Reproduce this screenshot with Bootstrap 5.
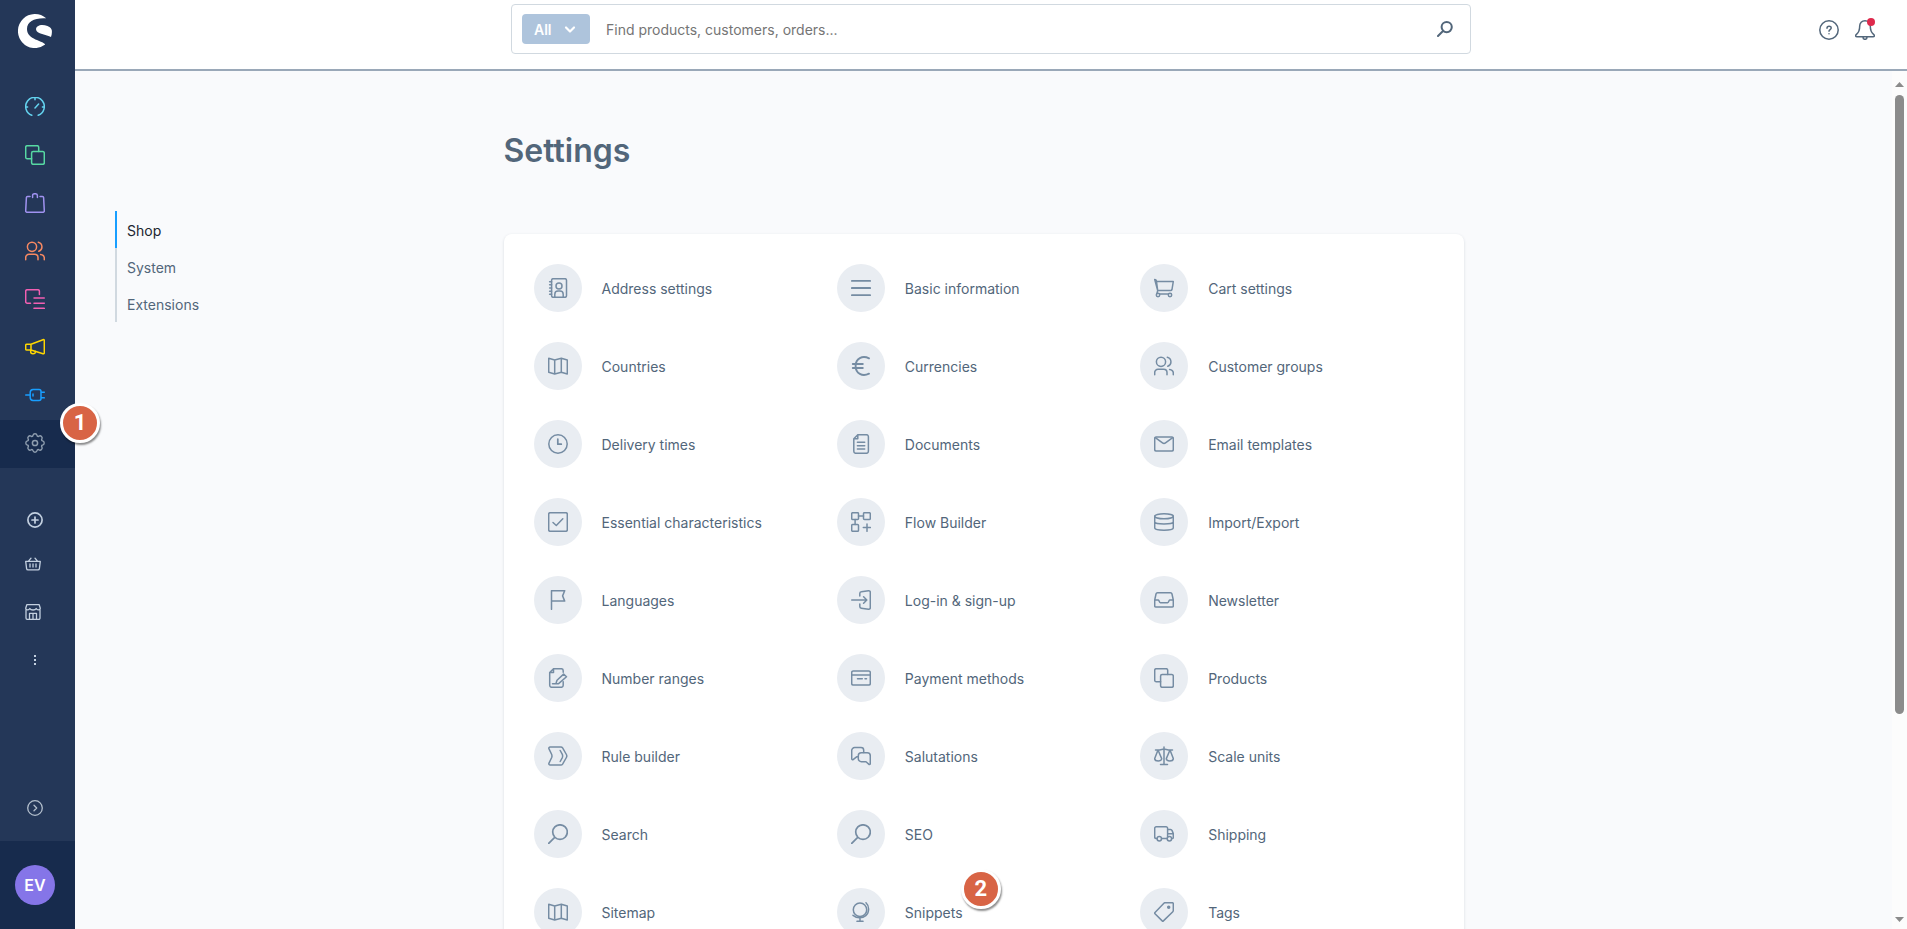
<!DOCTYPE html>
<html lang="en">
<head>
<meta charset="utf-8">
<meta name="viewport" content="width=device-width, initial-scale=1">
<title>Settings</title>
<link href="https://cdn.jsdelivr.net/npm/bootstrap@5.3.0/dist/css/bootstrap.min.css" rel="stylesheet">
<style>
  :root { --navy: #243758; --navy-dark: #172b4d; --ink: #52667a; --icon: #758ca3; --line: #d1d9e0; }
  body { font-family: Inter, "Liberation Sans", sans-serif; font-optical-sizing: none; font-size: 14px; line-height: 20px; color: var(--ink); }
  body, .canvas { background: #f9fafc; }
  svg { display: block; flex: none; }
  .ico { width: 20px; height: 20px; fill: none; stroke: currentColor; stroke-width: 1.5; stroke-linecap: round; stroke-linejoin: round; }
  .ico-sm { width: 16px; height: 16px; stroke-width: 1.3; }
  .ico-xs { width: 12px; height: 12px; }

  .sidebar { width: 75px; background: var(--navy); z-index: 2; }
  .brand { height: 84px; padding: 14px 0 0 18px; }
  .side-item { height: 48px; padding: 0 0 2px 25px; color: #c3d0e0; }
  .side-item.active { background: var(--navy-dark); color: #8f9eaf; }
  .side-item.short { height: 40px; }
  .side-item .slot { width: 20px; display: flex; justify-content: center; }
  .quick { margin-top: 33px; }
  .side-item.toggle { height: 65px; border: 0; background: transparent; color: #b3bfcc; }
  .account { height: 88px; padding-left: 15px; background: var(--navy-dark); }
  .avatar { width: 40px; height: 40px; background: #8575e8; color: #fff; font-size: 16px; font-weight: 600; }

  .topbar { height: 71px; padding-top: 4px; background: #fff; border-bottom: 2px solid #9aa8b8; }
  .three { display: grid; grid-template-columns: minmax(0, 1fr) minmax(0, 960px) minmax(0, 1fr); align-items: start; }
  .searchbox { height: 50px; padding: 0 17px 0 10px; border: 1px solid var(--line); border-radius: 4px; background: #fff; }
  .btn-scope { width: 68px; height: 30px; padding: 2px 14px 0 12px; background: #aec4dc; color: #fff; font-weight: 600; font-size: 14px; line-height: 20px; border: 0; border-radius: 4px; }
  .searchbox input { border: 0; outline: 0; padding: 2px 0 0; margin-left: 16px; font-size: 14px; line-height: 20px; color: var(--ink); background: transparent; }
  .searchbox input::placeholder { color: #757575; opacity: 1; }
  .plain { border: 0; background: transparent; padding: 0; color: var(--ink); }
  .actions { height: 52px; padding-right: 32px; gap: 16px; }
  .dot { width: 8px; height: 8px; top: -2px; right: 0; background: #de294c; }

  .anchors { grid-row: 1 / 3; padding: 140px 0 0 40px; }
  .anchors a { height: 37px; padding: 2px 0 0 10px; border-left: 2px solid var(--line); color: var(--ink); }
  .anchors a.active { border-color: #189eff; color: #1c2530; }
  .page-title { margin: 56px 0 59px; font-size: 32px; line-height: 48px; font-weight: 600; color: var(--ink); }
  .panel { grid-column: 2; padding: 30px; background: #fff; border-radius: 8px; box-shadow: 0 1px 3px rgba(40, 60, 90, .16); }
  .tiles { display: grid; grid-template-columns: repeat(3, minmax(0, 1fr)); gap: 30px 10px; }
  .tile { height: 48px; padding-top: 2px; gap: 20px; color: var(--ink); }
  .disc { width: 48px; height: 48px; margin-top: -2px; flex: none; background: #e9edf2; color: var(--icon); }

  .rail { width: 15px; padding: 11px 3px 7px; background: #fcfcfc; color: #8b8b8b; }
  .rail .track { padding: 8px 0; }
  .rail .thumb { height: 76%; width: 9px; border-radius: 5px; background: #8b8b8b; }
  .step-pin { width: 40px; height: 40px; border: 3px solid #fff; background: #d86445; color: #fff; font-family: Roboto, sans-serif; font-weight: 700; font-size: 22px; line-height: 1; box-shadow: 1px 2px 2px rgba(0, 0, 0, .45); z-index: 3; }
  .pin-one { left: 60px; top: -17px; }
  .pin-two { left: 124px; top: -19px; }
</style>
</head>
<body class="d-flex vh-100 overflow-hidden">

<svg width="0" height="0" class="position-absolute" aria-hidden="true">
  <symbol id="i-gauge" viewBox="0 0 20 20"><path d="M6.800 18.300a9.300 9.300 0 1 1 6.400 0M10 1v1.800M1 10h1.600M17.400 10H19M10 11l3.600-4"/></symbol>
  <symbol id="i-copy" viewBox="0 0 20 20"><path d="M6.600 13.700H2.200A1.500 1.500 0 0 1 .7 12.200V2.200A1.500 1.500 0 0 1 2.200.7h10a1.500 1.500 0 0 1 1.500 1.500v4.400"/><rect x="6.600" y="6.600" width="12.700" height="12.700" rx="1.500"/></symbol>
  <symbol id="i-bag" viewBox="0 0 20 20"><path d="M5 3.400H2.600a1.200 1.200 0 0 0-1.200 1.100L.7 17.800a1.400 1.400 0 0 0 1.400 1.500h15.800a1.400 1.400 0 0 0 1.400-1.500L18.600 4.500a1.200 1.200 0 0 0-1.200-1.100H15M7.600 4.600V2.400C7.600 1.400 8.400.7 10 .7s2.400.7 2.400 1.700v2.200"/></symbol>
  <symbol id="i-users" viewBox="0 0 20 20"><circle cx="7" cy="5.800" r="4.600"/><path d="M.7 18.700v-2.200a3.300 3.300 0 0 1 3.300-3.300h5.700a3.300 3.300 0 0 1 3.300 3.300v2.200M13.300 1.200a4.700 4.700 0 0 1 .5 9M15.600 13.400c2.300.4 3.700 1.500 3.700 3.500v1.800"/></symbol>
  <symbol id="i-orders" viewBox="0 0 20 20"><path d="M5.500 14.200H2.200a1.500 1.500 0 0 1-1.500-1.500V2.200A1.500 1.500 0 0 1 2.200.7h10.700a1.500 1.500 0 0 1 1.500 1.500v3.400M9 9h10.300M9 14.200h10.300M9 19.300h10.300"/></symbol>
  <symbol id="i-horn" viewBox="0 0 20 20"><path d="M6 7.200 18 2.700c.8-.3 1.300 0 1.300.8v12.300c0 .8-.5 1.100-1.300.9L6 13M6 7.200V13M6 7.200H1.700a1 1 0 0 0-1 1V12a1 1 0 0 0 1 1H6M5.700 13.200v1.500c0 2.700 4.300 2.700 4.800.4l.2-.8"/></symbol>
  <symbol id="i-plug" viewBox="0 0 20 20"><path d="M.7 10h4.500M8 4.400h6a2 2 0 0 1 2 2v7.200a2 2 0 0 1-2 2H8a3 3 0 0 1-2.800-3V7.400a3 3 0 0 1 2.800-3ZM16 7.200h3.300M16 12.800h3.300M8 9v2"/></symbol>
  <symbol id="i-gear" viewBox="0 0 20 20"><circle cx="10" cy="10" r="2.600"/><path transform="translate(.8 .8) scale(1.15)" stroke-width="1.200" d="M9.796 1.343c-.527-1.790-3.065-1.790-3.592 0l-.094.319a.873.873 0 0 1-1.255.520l-.292-.160c-1.640-.892-3.433.902-2.540 2.541l.159.292a.873.873 0 0 1-.520 1.255l-.319.094c-1.790.527-1.790 3.065 0 3.592l.319.094a.873.873 0 0 1 .520 1.255l-.160.292c-.892 1.640.901 3.434 2.541 2.540l.292-.159a.873.873 0 0 1 1.255.520l.094.319c.527 1.790 3.065 1.790 3.592 0l.094-.319a.873.873 0 0 1 1.255-.520l.292.160c1.640.893 3.434-.902 2.540-2.541l-.159-.292a.873.873 0 0 1 .520-1.255l.319-.094c1.790-.527 1.790-3.065 0-3.592l-.319-.094a.873.873 0 0 1-.520-1.255l.160-.292c.893-1.640-.902-3.433-2.541-2.540l-.292.159a.873.873 0 0 1-1.255-.520z"/></symbol>
  <symbol id="i-plus" viewBox="0 0 16 16"><path stroke-width="1.700" d="M8 .9a7.100 7.100 0 1 1 0 14.200A7.100 7.100 0 0 1 8 .9ZM8 5v6M5 8h6"/></symbol>
  <symbol id="i-basket" viewBox="0 0 16 16"><path d="M.7 5.400h14.600l-.9 7.200a1.500 1.500 0 0 1-1.500 1.300H3.100a1.500 1.500 0 0 1-1.500-1.300ZM3.500 5.200 6 2.200M12.500 5.200l-2.500-3M5 8v3M8 8v3M11 8v3"/></symbol>
  <symbol id="i-shop" viewBox="0 0 16 16"><path d="M1 5.500v8.600a1.200 1.200 0 0 0 1.200 1.200h11.600a1.200 1.200 0 0 0 1.200-1.200V5.500M1.800.7h12.400l1.100 3.600c-.3 2-3.300 2.200-4.100.2-.9 2-5.400 2-6.400 0-.8 2-3.800 1.800-4.100-.2ZM4.500 15V9.300h7V15M8 9.500V15"/></symbol>
  <symbol id="i-dots" viewBox="0 0 16 16"><path fill="currentColor" stroke="none" d="M7 3h2v2H7zM7 7h2v2H7zM7 11h2v2H7z"/></symbol>
  <symbol id="i-next" viewBox="0 0 16 16"><circle cx="8" cy="8" r="7.300"/><path d="m7 5.300 2.700 2.700L7 10.700"/></symbol>
  <symbol id="i-chev" viewBox="0 0 12 12"><path stroke-width="2.200" d="m2 3.500 4 4 4-4"/></symbol>
  <symbol id="i-search" viewBox="0 0 20 20"><path stroke-width="1.700" d="M12 .8a7.300 7.300 0 1 1 0 14.600A7.300 7.300 0 0 1 12 .8ZM6.700 13.300l-6 6"/></symbol>
  <symbol id="i-find" viewBox="0 0 16 16"><path stroke-width="2" d="M9.700 1a5.100 5.100 0 1 1 0 10.200A5.100 5.100 0 0 1 9.700 1ZM6 10l-5 5"/></symbol>
  <symbol id="i-help" viewBox="0 0 20 20"><circle cx="10" cy="10" r="9.200"/><path d="M8 8.300C8 5.600 12.200 5.700 12.200 8c0 1.500-2 1.600-2.200 3.200M10 13.700v.1"/></symbol>
  <symbol id="i-bell" viewBox="0 0 20 20"><path d="M10 .8c3.200 0 5.300 2.200 5.300 5.300 0 5.500 1.200 6.600 3 8 1.800 1.500 1.200 2.600-.3 2.600H2c-1.500 0-2.100-1.100-.3-2.600 1.800-1.400 3-2.500 3-8C4.700 3 6.800.8 10 .8ZM8 17.200c0 2.800 4 2.800 4 0"/></symbol>

  <symbol id="i-address" viewBox="0 0 20 20"><rect x="3.600" y=".7" width="14.900" height="18.600" rx="1.500"/><circle cx="11" cy="7.900" r="3"/><path d="M6.800 19v-2.700c0-2 1.200-3.200 3.200-3.200h2c2 0 3.200 1.200 3.200 3.200V19M1.600 3.700h2M1.600 6.800h2M1.600 10h2M1.600 13.200h2M1.600 16.300h2"/></symbol>
  <symbol id="i-map" viewBox="0 0 20 20"><path d="m.7 2.300 6 1.700 6.600-1.700 6 1.700v14l-6-1.700L6.700 18l-6-1.700ZM6.700 4v14M13.300 2.300v14"/></symbol>
  <symbol id="i-clock" viewBox="0 0 20 20"><circle cx="10" cy="10" r="9.200"/><path stroke-width="1.700" d="M9.800 5v5.200h3.500"/></symbol>
  <symbol id="i-check" viewBox="0 0 20 20"><rect x=".7" y=".7" width="18.600" height="18.600" rx="1.500"/><path d="m5 10.500 3.300 3 6.500-6.800"/></symbol>
  <symbol id="i-flag" viewBox="0 0 20 20"><path d="M3.500 19.300V.7H16.700L14.600 5.900 16.700 11.100H3.500"/></symbol>
  <symbol id="i-note" viewBox="0 0 20 20"><path d="M15.200 4.300V2.700a2 2 0 0 0-2-2H5.500L1.700 4.500v12.800a2 2 0 0 0 2 2h9.500a2 2 0 0 0 2-2v-3.500M5.500.9v3.600H1.900M4.500 15.700h6M8.200 14.800l.8-2.500 6.600-6.200 2.900 2.700-7.600 6.600"/></symbol>
  <symbol id="i-rule" viewBox="0 0 20 20"><path d="M2.200.9h10.700c.8 0 1.300.4 1.700 1l3.800 6.600c.5.900.5 2.100 0 3l-3.800 6.600c-.4.600-.9 1-1.700 1H2.200c-1.100 0-1.700-1-1.200-2l2.700-5.600c.3-.8.3-2.200 0-3L1 2.900C.5 1.900 1.100.9 2.200.9ZM12.200 4.500l2 3.700c.6 1.200.6 2.400 0 3.600l-2 3.700"/></symbol>
  <symbol id="i-menu" viewBox="0 0 20 20"><path stroke-width="1.900" d="M.9 2.900h18.200M.9 10h18.200M.9 17.100h18.200"/></symbol>
  <symbol id="i-euro" viewBox="0 0 20 20"><path stroke-width="1.900" d="M18 2.300C11.500-.9 4.600 2.300 4.600 10S11.500 20.900 18 17.700M1.800 8h10M1.800 12h10"/></symbol>
  <symbol id="i-doc" viewBox="0 0 20 20"><path d="M6.800.7h8.600a2 2 0 0 1 2 2v14.600a2 2 0 0 1-2 2H4.800a2 2 0 0 1-2-2V4.700ZM6.800.7v4h-4M6.400 8.300h7.300M6.400 11.700h7.300M6.400 15h7.300"/></symbol>
  <symbol id="i-flow" viewBox="0 0 20 20"><rect x=".7" y=".7" width="6.800" height="6.800" rx="1"/><rect x="12.500" y=".7" width="6.800" height="6.800" rx="1"/><rect x=".7" y="12.500" width="6.800" height="6.800" rx="1"/><path d="M7.500 4.100h5M4.100 7.500v5M16 12v7.300M12.300 15.600h7.100"/></symbol>
  <symbol id="i-login" viewBox="0 0 20 20"><path d="M.7 10h15M12.600 6.800l3.200 3.200-3.200 3.200M8.800 6V3.400c0-1 .6-1.500 1.500-1.600l7.300-1c1-.1 1.700.4 1.700 1.400v15.600c0 1-.7 1.500-1.700 1.400l-7.300-1c-.9-.1-1.500-.6-1.500-1.600V14"/></symbol>
  <symbol id="i-pay" viewBox="0 0 20 20"><rect x=".7" y="2.900" width="18.600" height="14.200" rx="1.500"/><path d="M.8 7h18.400M6.500 10.700h4.800M14 10.700h1.500"/></symbol>
  <symbol id="i-chat" viewBox="0 0 20 20"><path d="M7.300 10.800H5.600l-3.200 2.500c-.9.700-1.700.2-1.700-.8V4.600a3 3 0 0 1 3-3H10a2.700 2.700 0 0 1 2.700 2.700v2.300"/><path d="M10.300 6.700h6a3 3 0 0 1 3 3v7.700c0 1-.8 1.400-1.600.7L15 15.700h-4.700a3 3 0 0 1-3-3v-3a3 3 0 0 1 3-3Z"/></symbol>
  <symbol id="i-globe" viewBox="0 0 20 20"><circle cx="9" cy="7.800" r="6.700"/><path d="M15 .8c3.500 3.200 3.500 9.600-.2 12.800-3.500 3-8.700 3-12.800-.3M9 15.800v3.500M6 19.300h6"/></symbol>
  <symbol id="i-cart" viewBox="0 0 20 20"><path d="M.7 1.500c1.200 0 1.700.4 1.800 2h16.800l-1.300 8c-.2.700-.6 1-1.300 1H3.700ZM2.500 3.500l1.200 9-.7 3M5.700 15.900h8.600"/><circle cx="4" cy="17" r="1.700"/><circle cx="16" cy="17" r="1.700"/></symbol>
  <symbol id="i-mail" viewBox="0 0 20 20"><rect x=".7" y="2.900" width="18.600" height="14.200" rx="1.500"/><path d="m1.300 3.600 7.200 5.200c1 .8 2 .8 3 0l7.200-5.200"/></symbol>
  <symbol id="i-stack" viewBox="0 0 20 20"><ellipse cx="10" cy="4.200" rx="9.300" ry="2.500"/><path d="M.7 4.200v11.600c0 3.300 18.600 3.300 18.600 0V4.200M.7 9.800c0 2.900 18.600 2.900 18.600 0"/></symbol>
  <symbol id="i-inbox" viewBox="0 0 20 20"><path d="M.7 10 2 4c.2-.8.700-1.200 1.500-1.200h13c.8 0 1.300.4 1.500 1.200l1.300 6v5.800c0 .8-.5 1.300-1.300 1.300H2c-.8 0-1.300-.5-1.300-1.300ZM.7 10h3.700c.8 0 .6 2.700 2 2.700h7.200c1.400 0 1.200-2.700 2-2.700h3.700"/></symbol>
  <symbol id="i-scale" viewBox="0 0 20 20"><path d="M10 1v17.500M6.500 18.600h7M1.500 3.900h4L10 3l4.500.9h4M4 4 .7 12.600c0 3.200 7 3.200 7 0ZM16 4l-3.700 8.600c0 3.200 7 3.200 7 0Z"/></symbol>
  <symbol id="i-truck" viewBox="0 0 20 20"><path d="M3 14.600h-.8a1.500 1.500 0 0 1-1.500-1.500V4.300a1.500 1.500 0 0 1 1.500-1.500h9.900a1.500 1.500 0 0 1 1.500 1.500v9M7.600 14.600h5.400M13.600 5.500h2.900c.8 0 1.300.4 1.600 1.100l1.200 3v4c0 .7-.4 1-1.200 1M13.600 9.800h5.600"/><circle cx="5.300" cy="14.800" r="2.200"/><circle cx="15.400" cy="14.800" r="2.200"/></symbol>
  <symbol id="i-tag" viewBox="0 0 20 20"><path d="M11 .7h7.300a1 1 0 0 1 1 1v6.900c0 .5-.2.800-.5 1.100L9.400 18.900c-.4.400-.8.400-1.200 0L1 11.700c-.4-.4-.4-.8 0-1.200L9.900 1.200c.3-.3.700-.5 1.100-.5Z"/><circle cx="14.700" cy="5.200" r="1" fill="currentColor"/></symbol>
</svg>

<aside class="sidebar d-flex flex-column flex-shrink-0 position-relative">
  <a href="#" class="brand d-block" aria-label="Home">
    <svg width="34" height="34" viewBox="0 0 34 34" fill="#fff"><path d="M28.200 4.300A17 17 0 1 0 27.200 30.600C25.500 26.500 9 26 9 15 9 7 17 3.600 28.200 4.300Z"/><path d="M18 15.300C18 11.200 24 9.700 29.500 12c3 1.400 4 2.700 4.300 4.300.3 2 0 4.500-.8 6.700C29 20.700 18.300 20.300 18 15.300Z"/></svg>
  </a>
  <nav class="d-flex flex-column" aria-label="Main">
    <a href="#" class="side-item d-flex align-items-center" style="color:#64d3ef" aria-label="Dashboard"><svg class="ico"><use href="#i-gauge"/></svg></a>
    <a href="#" class="side-item d-flex align-items-center" style="color:#57d9a3" aria-label="Catalogues"><svg class="ico"><use href="#i-copy"/></svg></a>
    <a href="#" class="side-item d-flex align-items-center" style="color:#a092f0" aria-label="Orders"><svg class="ico"><use href="#i-bag"/></svg></a>
    <a href="#" class="side-item d-flex align-items-center" style="color:#f88962" aria-label="Customers"><svg class="ico"><use href="#i-users"/></svg></a>
    <a href="#" class="side-item d-flex align-items-center" style="color:#f25fb2" aria-label="Content"><svg class="ico"><use href="#i-orders"/></svg></a>
    <a href="#" class="side-item d-flex align-items-center" style="color:#ffd700" aria-label="Marketing"><svg class="ico"><use href="#i-horn"/></svg></a>
    <a href="#" class="side-item d-flex align-items-center" style="color:#189eff" aria-label="Extensions"><svg class="ico"><use href="#i-plug"/></svg></a>
    <a href="#" class="side-item active d-flex align-items-center position-relative text-decoration-none" aria-label="Settings"><svg class="ico"><use href="#i-gear"/></svg><span class="step-pin pin-one position-absolute rounded-circle d-flex align-items-center justify-content-center">1</span></a>
  </nav>
  <nav class="quick d-flex flex-column" aria-label="Sales channels">
    <a href="#" class="side-item short d-flex align-items-center" aria-label="Add channel"><span class="slot"><svg class="ico ico-sm"><use href="#i-plus"/></svg></span></a>
    <a href="#" class="side-item d-flex align-items-center" aria-label="Headless"><svg class="ico ico-sm"><use href="#i-basket"/></svg></a>
    <a href="#" class="side-item d-flex align-items-center" aria-label="Storefront"><svg class="ico ico-sm"><use href="#i-shop"/></svg></a>
    <a href="#" class="side-item d-flex align-items-center" aria-label="More"><span class="slot"><svg class="ico ico-sm"><use href="#i-dots"/></svg></span></a>
  </nav>
  <button type="button" class="side-item toggle d-flex align-items-center mt-auto" aria-label="Expand menu"><span class="slot"><svg class="ico ico-sm"><use href="#i-next"/></svg></span></button>
  <div class="account d-flex align-items-center"><div class="avatar rounded-circle d-flex align-items-center justify-content-center">EV</div></div>
</aside>

<div class="d-flex flex-column flex-grow-1 overflow-hidden">
  <header class="topbar three flex-shrink-0">
    <div></div>
    <form class="searchbox d-flex align-items-center" role="search">
      <button type="button" class="btn-scope d-flex align-items-center justify-content-between">All <svg class="ico ico-xs"><use href="#i-chev"/></svg></button>
      <input type="text" class="flex-grow-1" placeholder="Find products, customers, orders..." aria-label="Search">
      <button type="button" class="plain" aria-label="Search"><svg class="ico ico-sm"><use href="#i-find"/></svg></button>
    </form>
    <div class="actions d-flex align-items-center justify-content-end">
      <button type="button" class="plain" aria-label="Help"><svg class="ico"><use href="#i-help"/></svg></button>
      <button type="button" class="plain position-relative" aria-label="Notifications"><svg class="ico"><use href="#i-bell"/></svg><span class="dot position-absolute rounded-circle"></span></button>
    </div>
  </header>

  <div class="d-flex flex-grow-1 overflow-hidden">
    <main class="canvas three flex-grow-1 overflow-hidden">
      <nav class="anchors d-flex flex-column" aria-label="Sections">
        <a href="#" class="active d-flex align-items-center text-decoration-none">Shop</a>
        <a href="#" class="d-flex align-items-center text-decoration-none">System</a>
        <a href="#" class="d-flex align-items-center text-decoration-none">Extensions</a>
      </nav>
      <h1 class="page-title">Settings</h1>
      <section class="panel">
        <div class="tiles">
          <a href="#" class="tile d-flex align-items-center text-decoration-none"><span class="disc rounded-circle d-flex align-items-center justify-content-center"><svg class="ico"><use href="#i-address"/></svg></span>Address settings</a>
          <a href="#" class="tile d-flex align-items-center text-decoration-none"><span class="disc rounded-circle d-flex align-items-center justify-content-center"><svg class="ico"><use href="#i-menu"/></svg></span>Basic information</a>
          <a href="#" class="tile d-flex align-items-center text-decoration-none"><span class="disc rounded-circle d-flex align-items-center justify-content-center"><svg class="ico"><use href="#i-cart"/></svg></span>Cart settings</a>
          <a href="#" class="tile d-flex align-items-center text-decoration-none"><span class="disc rounded-circle d-flex align-items-center justify-content-center"><svg class="ico"><use href="#i-map"/></svg></span>Countries</a>
          <a href="#" class="tile d-flex align-items-center text-decoration-none"><span class="disc rounded-circle d-flex align-items-center justify-content-center"><svg class="ico"><use href="#i-euro"/></svg></span>Currencies</a>
          <a href="#" class="tile d-flex align-items-center text-decoration-none"><span class="disc rounded-circle d-flex align-items-center justify-content-center"><svg class="ico"><use href="#i-users"/></svg></span>Customer groups</a>
          <a href="#" class="tile d-flex align-items-center text-decoration-none"><span class="disc rounded-circle d-flex align-items-center justify-content-center"><svg class="ico"><use href="#i-clock"/></svg></span>Delivery times</a>
          <a href="#" class="tile d-flex align-items-center text-decoration-none"><span class="disc rounded-circle d-flex align-items-center justify-content-center"><svg class="ico"><use href="#i-doc"/></svg></span>Documents</a>
          <a href="#" class="tile d-flex align-items-center text-decoration-none"><span class="disc rounded-circle d-flex align-items-center justify-content-center"><svg class="ico"><use href="#i-mail"/></svg></span>Email templates</a>
          <a href="#" class="tile d-flex align-items-center text-decoration-none"><span class="disc rounded-circle d-flex align-items-center justify-content-center"><svg class="ico"><use href="#i-check"/></svg></span>Essential characteristics</a>
          <a href="#" class="tile d-flex align-items-center text-decoration-none"><span class="disc rounded-circle d-flex align-items-center justify-content-center"><svg class="ico"><use href="#i-flow"/></svg></span>Flow Builder</a>
          <a href="#" class="tile d-flex align-items-center text-decoration-none"><span class="disc rounded-circle d-flex align-items-center justify-content-center"><svg class="ico"><use href="#i-stack"/></svg></span>Import/Export</a>
          <a href="#" class="tile d-flex align-items-center text-decoration-none"><span class="disc rounded-circle d-flex align-items-center justify-content-center"><svg class="ico"><use href="#i-flag"/></svg></span>Languages</a>
          <a href="#" class="tile d-flex align-items-center text-decoration-none"><span class="disc rounded-circle d-flex align-items-center justify-content-center"><svg class="ico"><use href="#i-login"/></svg></span>Log-in &amp; sign-up</a>
          <a href="#" class="tile d-flex align-items-center text-decoration-none"><span class="disc rounded-circle d-flex align-items-center justify-content-center"><svg class="ico"><use href="#i-inbox"/></svg></span>Newsletter</a>
          <a href="#" class="tile d-flex align-items-center text-decoration-none"><span class="disc rounded-circle d-flex align-items-center justify-content-center"><svg class="ico"><use href="#i-note"/></svg></span>Number ranges</a>
          <a href="#" class="tile d-flex align-items-center text-decoration-none"><span class="disc rounded-circle d-flex align-items-center justify-content-center"><svg class="ico"><use href="#i-pay"/></svg></span>Payment methods</a>
          <a href="#" class="tile d-flex align-items-center text-decoration-none"><span class="disc rounded-circle d-flex align-items-center justify-content-center"><svg class="ico"><use href="#i-copy"/></svg></span>Products</a>
          <a href="#" class="tile d-flex align-items-center text-decoration-none"><span class="disc rounded-circle d-flex align-items-center justify-content-center"><svg class="ico"><use href="#i-rule"/></svg></span>Rule builder</a>
          <a href="#" class="tile d-flex align-items-center text-decoration-none"><span class="disc rounded-circle d-flex align-items-center justify-content-center"><svg class="ico"><use href="#i-chat"/></svg></span>Salutations</a>
          <a href="#" class="tile d-flex align-items-center text-decoration-none"><span class="disc rounded-circle d-flex align-items-center justify-content-center"><svg class="ico"><use href="#i-scale"/></svg></span>Scale units</a>
          <a href="#" class="tile d-flex align-items-center text-decoration-none"><span class="disc rounded-circle d-flex align-items-center justify-content-center"><svg class="ico"><use href="#i-search"/></svg></span>Search</a>
          <a href="#" class="tile d-flex align-items-center text-decoration-none"><span class="disc rounded-circle d-flex align-items-center justify-content-center"><svg class="ico"><use href="#i-search"/></svg></span>SEO</a>
          <a href="#" class="tile d-flex align-items-center text-decoration-none"><span class="disc rounded-circle d-flex align-items-center justify-content-center"><svg class="ico"><use href="#i-truck"/></svg></span>Shipping</a>
          <a href="#" class="tile d-flex align-items-center text-decoration-none"><span class="disc rounded-circle d-flex align-items-center justify-content-center"><svg class="ico"><use href="#i-map"/></svg></span>Sitemap</a>
          <a href="#" class="tile d-flex align-items-center text-decoration-none position-relative"><span class="disc rounded-circle d-flex align-items-center justify-content-center"><svg class="ico"><use href="#i-globe"/></svg></span>Snippets<span class="step-pin pin-two position-absolute rounded-circle d-flex align-items-center justify-content-center">2</span></a>
          <a href="#" class="tile d-flex align-items-center text-decoration-none"><span class="disc rounded-circle d-flex align-items-center justify-content-center"><svg class="ico"><use href="#i-tag"/></svg></span>Tags</a>
        </div>
      </section>
    </main>
    <div class="rail d-flex flex-column flex-shrink-0" aria-hidden="true">
      <svg width="9" height="5" viewBox="0 0 9 5" fill="currentColor"><path d="M0 5 4.500 0 9 5z"/></svg>
      <div class="track flex-grow-1"><div class="thumb"></div></div>
      <svg width="9" height="5" viewBox="0 0 9 5" fill="currentColor"><path d="M0 0h9L4.500 5z"/></svg>
    </div>
  </div>
</div>

<script src="https://cdn.jsdelivr.net/npm/bootstrap@5.3.0/dist/js/bootstrap.bundle.min.js"></script>
</body>
</html>
